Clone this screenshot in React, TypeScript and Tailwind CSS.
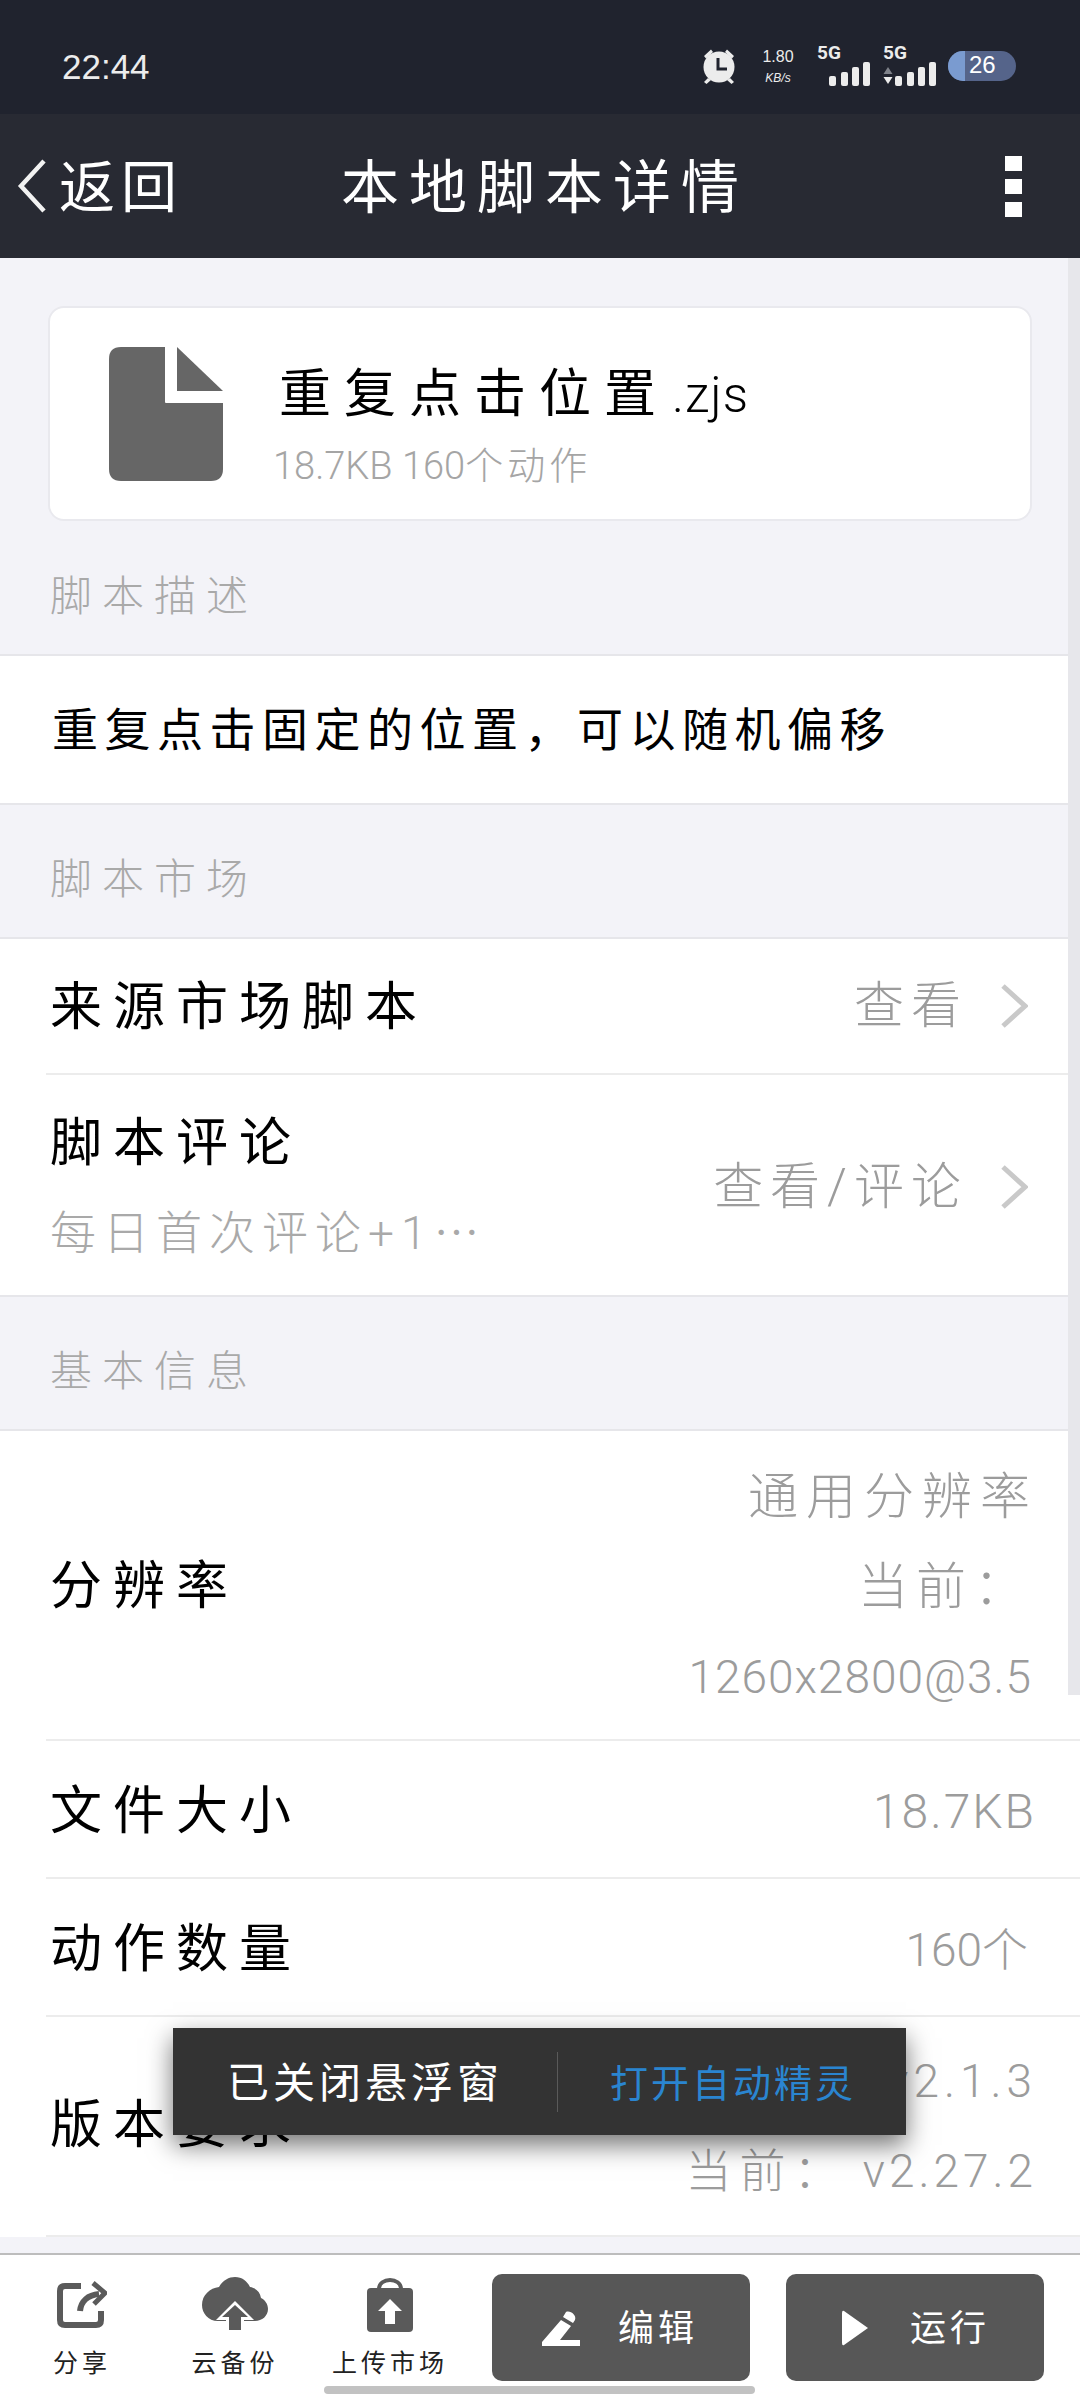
import { ReactNode } from "react";

function Chevron() {
  return (
    <svg width="28" height="44" viewBox="0 0 28 44" className="ml-[32px] shrink-0">
      <path d="M3 2 L25 22 L3 42" fill="none" stroke="#c9c9c9" strokeWidth="5" />
    </svg>
  );
}

function SectionLabel({ children, h }: { children: ReactNode; h: string }) {
  return (
    <div className={`flex items-center pl-[50px] pt-[18px] border-b-2 border-[#e6e6ea] ${h}`}>
      <span className="text-[42px] tracking-[10px] text-[#a9a9a9] font-light leading-none">{children}</span>
    </div>
  );
}

function Row({ label, value, className }: { label: string; value: ReactNode; className: string }) {
  return (
    <div className={`ml-[46px] flex items-center justify-between border-b-2 border-[#ececec] pr-[48px] ${className}`}>
      <span className="ml-[4px] text-[52px] leading-none tracking-[11px] text-black">{label}</span>
      <div className="text-right text-[46px] leading-[90px] text-[#9c9c9c] font-light">{value}</div>
    </div>
  );
}

function SignalBars() {
  return (
    <svg width="42" height="26" viewBox="0 0 42 26" fill="#ececec">
      <rect x="0" y="15" width="7" height="10" rx="2" />
      <rect x="12" y="11" width="7" height="14" rx="2" />
      <rect x="23" y="6" width="7" height="19" rx="2" />
      <rect x="34" y="1" width="7" height="24" rx="2" />
    </svg>
  );
}

function StatusBar() {
  return (
    <div className="flex h-[114px] shrink-0 items-center bg-[#20232e] pl-[62px] pr-[64px] pt-[18px] text-[#ececec]">
      <span className="text-[35px] leading-none font-['Liberation_Sans']">22:44</span>
      <div className="ml-auto flex items-center">
        <svg width="40" height="38" viewBox="0 0 40 38" fill="#ececec">
          <path d="M5 9 L12 2.5 L14 5 L7 11.5 Z M35 9 L28 2.5 L26 5 L33 11.5 Z M9 31 L5 35 L7.5 37 L12 33 Z M31 31 L35 35 L32.5 37 L28 33 Z" />
          <circle cx="20" cy="20" r="15.5" />
          <path d="M19 11 V22 H28" fill="none" stroke="#20232e" strokeWidth="3" />
        </svg>
        <div className="ml-[21px] flex w-[36px] flex-col items-center font-['Liberation_Sans'] font-light">
          <span className="text-[16px] leading-[20px]">1.80</span>
          <span className="mt-[4px] text-[12px] italic leading-[14px]">KB/s</span>
        </div>
        <div className="ml-[21px] flex w-[54px] flex-col">
          <span className="text-[19px] font-bold leading-[16px] font-['Roboto']">5G</span>
          <div className="flex justify-end"><SignalBars /></div>
        </div>
        <div className="ml-[12px] flex w-[54px] flex-col">
          <span className="text-[19px] font-bold leading-[16px] font-['Roboto']">5G</span>
          <div className="flex items-end justify-between">
            <svg width="10" height="20" viewBox="0 0 10 20" className="mb-[2px]">
              <path d="M5 2 L9.5 9 H0.5 Z" fill="#7f828a" />
              <path d="M5 19 L9.5 12 H0.5 Z" fill="#ececec" />
            </svg>
            <SignalBars />
          </div>
        </div>
        <div className="ml-[11px] flex h-[30px] w-[68px] overflow-hidden rounded-full bg-[#55648a]">
          <div className="w-[17px] bg-[#7a9bd0]" />
          <span className="ml-[4px] text-[24px] leading-[28px] text-white font-['Liberation_Sans']">26</span>
        </div>
      </div>
    </div>
  );
}

function NavBar() {
  return (
    <div className="relative flex h-[144px] shrink-0 items-center bg-[#282a33] text-white">
      <svg width="30" height="56" viewBox="0 0 30 56" className="ml-[17px] shrink-0">
        <path d="M27 3 L4 28 L27 53" fill="none" stroke="#f2f2f2" strokeWidth="4.5" />
      </svg>
      <span className="ml-[12px] mt-[4px] text-[56px] leading-none tracking-[6px]">返回</span>
      <span className="ml-[158px] mt-[4px] text-[58px] leading-none tracking-[10px]">本地脚本详情</span>
      <div className="ml-auto mr-[58px] flex flex-col gap-[8px]">
        <div className="h-[15px] w-[17px] bg-white" />
        <div className="h-[15px] w-[17px] bg-white" />
        <div className="h-[15px] w-[17px] bg-white" />
      </div>
    </div>
  );
}

function FileCard() {
  return (
    <div className="mx-[48px] mt-[48px] flex h-[215px] items-center rounded-[16px] border-2 border-[#e9e9ee] bg-white pl-[59px]">
      <svg width="114" height="134" viewBox="0 0 114 134" className="shrink-0">
        <path d="M12 0 H56 V55 Q56 56 57 56 H114 V122 Q114 134 102 134 H12 Q0 134 0 122 V12 Q0 0 12 0 Z" fill="#666666" />
        <path d="M68 0 L114 44 H68 Z" fill="#666666" />
      </svg>
      <div className="ml-[50px] mt-[26px] flex flex-col">
        <span className="ml-[6px] text-[52px] leading-none tracking-[13px] text-black">
          重复点击位置<span className="ml-[3px] text-[50px] font-light tracking-[1px]">.zjs</span>
        </span>
        <span className="mt-[26px] text-[38px] leading-none text-[#a5a5a5] font-light">
          18.7KB 160<span className="tracking-[4px]">个动作</span>
        </span>
      </div>
    </div>
  );
}

function BottomItem({ icon, label, width }: { icon: ReactNode; label: string; width: string }) {
  return (
    <div className={`flex shrink-0 flex-col items-center ${width}`}>
      <div className="flex h-[62px] items-center">{icon}</div>
      <span className="mt-[15px] whitespace-nowrap text-[25px] leading-none tracking-[4px] text-[#222222]">{label}</span>
    </div>
  );
}

function BottomBar() {
  return (
    <div className="relative flex h-[147px] shrink-0 items-start border-t-2 border-[#bdbdbd] bg-white pt-[19px]">
      <div className="ml-[27px] flex w-[465px] shrink-0 items-start">
        <BottomItem
          width="w-[110px]"
          label="分享"
          icon={
            <svg width="50" height="48" viewBox="0 0 50 48" fill="none" stroke="#5a5a5a">
              <path d="M24 5 H8 Q3 5 3 10 V39 Q3 44 8 44 H39 Q44 44 44 39 V30" strokeWidth="6" />
              <path d="M23 30 C24 20 31 14 42 13" strokeWidth="6" />
              <path d="M36 2 L48 12 L37 23" strokeWidth="5" />
            </svg>
          }
        />
        <BottomItem
          width="w-[196px]"
          label="云备份"
          icon={
            <svg width="66" height="56" viewBox="0 0 66 56">
              <path d="M16 44 C6 44 0 36 0 28 C0 18 8 11 17 10 C21 3 27 0 33 0 C40 0 45 4 48 10 C54 11 58 15 59 21 C63 23 66 27 66 32 C66 39 60 44 53 44 Z" fill="#5a5a5a" />
              <path d="M33 24 L52 43 H42 V55 H24 V43 H14 Z" fill="#ffffff" />
              <path d="M33 28 L46 40 H39 V53 H27 V40 H20 Z" fill="#5a5a5a" />
            </svg>
          }
        />
        <BottomItem
          width="w-[114px]"
          label="上传市场"
          icon={
            <svg width="48" height="56" viewBox="0 0 48 56">
              <path d="M13 12 C13 0 35 0 35 12" fill="none" stroke="#5a5a5a" strokeWidth="4" />
              <rect x="1" y="11" width="46" height="44" rx="4" fill="#5a5a5a" />
              <path d="M24 22 L36 34 H29 V47 H19 V34 H12 Z" fill="#ffffff" />
            </svg>
          }
        />
      </div>
      <button className="flex h-[107px] w-[258px] items-center rounded-[10px] bg-[#575757] pl-[50px] text-white">
        <svg width="38" height="36" viewBox="0 0 38 36" fill="#ffffff" className="shrink-0">
          <path d="M24 2 C28 0 35 5 33 10 L31 13 L21 7 Z M19 10 L29 16 L18 30 H38 V36 H0 V32 Z" />
        </svg>
        <span className="ml-[38px] mt-[3px] text-[36px] leading-none tracking-[4px]">编辑</span>
      </button>
      <button className="ml-[36px] flex h-[107px] w-[258px] items-center rounded-[10px] bg-[#575757] pl-[55px] text-white">
        <svg width="28" height="36" viewBox="0 0 28 36" fill="#ffffff" className="shrink-0">
          <path d="M1 3 Q1 0 3 1 L27 18 L3 35 Q1 36 1 33 Z" />
        </svg>
        <span className="ml-[41px] mt-[3px] text-[36px] leading-none tracking-[4px]">运行</span>
      </button>
      <div className="absolute bottom-[6px] left-[324px] h-[8px] w-[431px] rounded-full bg-[#c2c2c2]" />
    </div>
  );
}

export default function App() {
  return (
    <div className="relative flex h-[2400px] w-[1080px] flex-col overflow-hidden bg-[#f3f3f8] font-['Roboto','Noto_Sans_CJK_SC',sans-serif]">
      <StatusBar />
      <NavBar />
      <div className="relative min-h-0 flex-1 overflow-hidden">
        <FileCard />
        <SectionLabel h="h-[135px]">脚本描述</SectionLabel>
        <div className="flex h-[149px] items-center border-b-2 border-[#e6e6ea] bg-white pl-[52px]">
          <span className="text-[46px] leading-none tracking-[6.5px] text-black">重复点击固定的位置，可以随机偏移</span>
        </div>
        <SectionLabel h="h-[134px]">脚本市场</SectionLabel>
        <div className="bg-white">
          <div className="ml-[46px] flex h-[136px] items-center justify-between border-b-2 border-[#ececec] pr-[52px]">
            <span className="ml-[4px] mt-[4px] text-[52px] leading-none tracking-[11px] text-black">来源市场脚本</span>
            <div className="flex items-center">
              <span className="text-[50px] leading-none tracking-[7px] text-[#9c9c9c] font-light">查看</span>
              <Chevron />
            </div>
          </div>
          <div className="ml-[46px] flex h-[220px] items-center justify-between pr-[52px] pt-[4px]">
            <div className="ml-[4px] flex flex-col">
              <span className="text-[52px] leading-none tracking-[11px] text-black">脚本评论</span>
              <span className="mt-[36px] text-[46px] leading-none tracking-[7px] text-[#a9a9a9] font-light">
                每日首次评论+1<span className="font-['Noto_Sans_CJK_SC']">…</span>
              </span>
            </div>
            <div className="flex items-center">
              <span className="text-[50px] leading-none tracking-[7px] text-[#9c9c9c] font-light">查看/评论</span>
              <Chevron />
            </div>
          </div>
        </div>
        <div className="border-t-2 border-[#e6e6ea]">
          <SectionLabel h="h-[134px]">基本信息</SectionLabel>
        </div>
        <div className="bg-white">
          <Row
            label="分辨率"
            className="h-[310px] pt-[3px]"
            value={
              <>
                <div className="-mr-[6px] text-[50px] tracking-[8px]">通用分辨率</div>
                <div className="text-[50px] tracking-[8px]">当前：</div>
                <div className="tracking-[1px]">1260x2800@3.5</div>
              </>
            }
          />
          <Row label="文件大小" className="h-[138px] pt-[5px]" value={<div className="-mr-[4px] text-[48px] tracking-[2px]">18.7KB</div>} />
          <Row label="动作数量" className="h-[138px] pt-[5px]" value={<>160<span className="tracking-[4px]">个</span></>} />
          <Row
            label="版本要求"
            className="h-[220px]"
            value={
              <>
                <div className="-mr-[5px] tracking-[5px]">v2.1.3</div>
                <div className="-mr-[5px] tracking-[4px]"><span className="text-[46px] tracking-[8px]">当前：</span> v2.27.2</div>
              </>
            }
          />
        </div>
        <div className="absolute right-0 top-0 h-[1437px] w-[12px] bg-[#e7e7eb]" />
      </div>
      <BottomBar />
      {/* toast */}
      <div className="absolute left-[173px] top-[2028px] flex h-[107px] w-[733px] items-center bg-[#333333] shadow-[0_10px_24px_rgba(0,0,0,0.55)]">
        <span className="ml-[54px] mt-[4px] text-[42px] leading-none tracking-[4px] text-white">已关闭悬浮窗</span>
        <div className="ml-[54px] h-[60px] w-px bg-[#5a5a5a]" />
        <span className="ml-[52px] mt-[4px] text-[38px] leading-none tracking-[3px] text-[#2a85d0]">打开自动精灵</span>
      </div>
    </div>
  );
}
